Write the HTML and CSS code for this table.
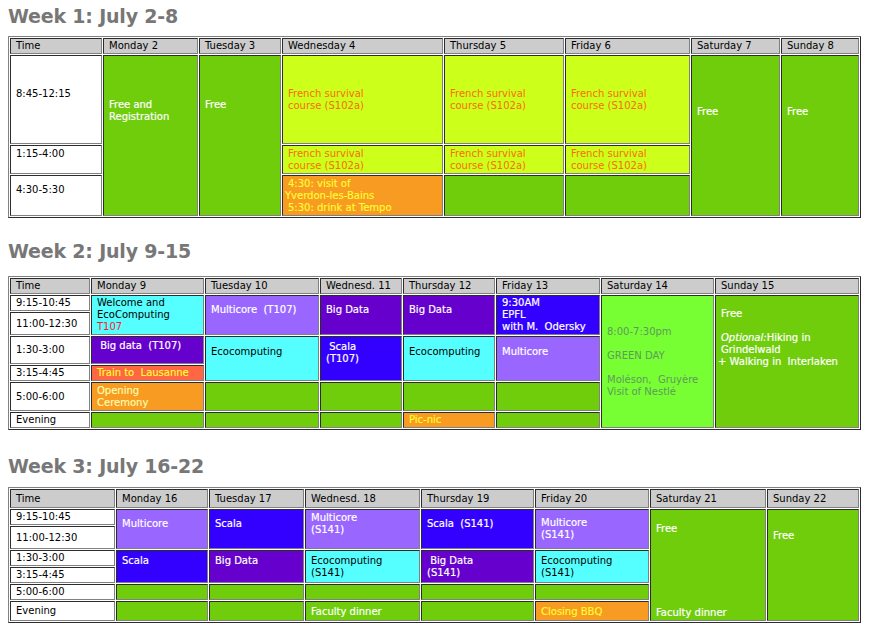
FILE: index.html
```html
<!DOCTYPE html>
<html>
<head>
<meta charset="utf-8">
<title>Summer school schedule</title>
<link rel="stylesheet" href="styles.css">
</head>
<body>
<div class="page">

<section class="week wk1">
<h2 class="wk-title">Week 1: July 2-8</h2>
<table class="sched">
<colgroup>
<col class="c92"><col class="c95"><col class="c82"><col class="c161"><col class="c120"><col class="c125"><col class="c89"><col class="c78">
</colgroup>
<tr class="h16"><th>Time</th><th>Monday 2</th><th>Tuesday 3</th><th>Wednesday 4</th><th>Thursday 5</th><th>Friday 6</th><th>Saturday 7</th><th>Sunday 8</th></tr>
<tr class="h89">
<td class="time">8:45-12:15<br>&nbsp;</td>
<td class="green wt top pt43" rowspan="3">Free and<br>Registration</td>
<td class="green wt top pt43" rowspan="3">Free</td>
<td class="lime fr">French survival<br>course (S102a)</td>
<td class="lime fr">French survival<br>course (S102a)</td>
<td class="lime fr">French survival<br>course (S102a)</td>
<td class="green wt top pt50" rowspan="3">Free</td>
<td class="green wt top pt50" rowspan="3">Free</td>
</tr>
<tr class="h29">
<td class="time">1:15-4:00<br>&nbsp;</td>
<td class="lime fr">French survival<br>course (S102a)</td>
<td class="lime fr">French survival<br>course (S102a)</td>
<td class="lime fr">French survival<br>course (S102a)</td>
</tr>
<tr class="h41">
<td class="time">4:30-5:30<br>&nbsp;</td>
<td class="orange yt">4:30: visit of<br><span class="out">Yverdon-les-Bains</span><br>5:30: drink at Tempo</td>
<td class="green"></td>
<td class="green"></td>
</tr>
</table>
</section>

<section class="week wk2">
<h2 class="wk-title">Week 2: July 9-15</h2>
<table class="sched">
<colgroup>
<col class="c80"><col class="c113"><col class="c114"><col class="c82"><col class="c92"><col class="c104"><col class="c113"><col class="c144">
</colgroup>
<tr class="h16"><th>Time</th><th>Monday 9</th><th>Tuesday 10</th><th>Wednesd. 11</th><th>Thursday 12</th><th>Friday 13</th><th>Saturday 14</th><th>Sunday 15</th></tr>
<tr class="h16">
<td class="time">9:15-10:45</td>
<td class="cyan" rowspan="2">Welcome and<br>EcoComputing<br><span class="red">T107</span></td>
<td class="lpurple wt top pt8" rowspan="2">Multicore&nbsp; (T107)</td>
<td class="dpurple wt top pt8" rowspan="2">Big Data</td>
<td class="dpurple wt top pt8" rowspan="2">Big Data</td>
<td class="blue wt top pt1" rowspan="2">9:30AM<br>EPFL<br>with M.&nbsp; Odersky</td>
<td class="bgreen gt" rowspan="6">8:00-7:30pm<br><br>GREEN DAY<br><br>Moléson,&nbsp; Gruyère<br>Visit of Nestlé</td>
<td class="green wt top pt12" rowspan="6">Free<br><br><i>Optional:</i>Hiking in<br>Grindelwald<br><span class="out">+ Walking in&nbsp; Interlaken</span></td>
</tr>
<tr class="h23">
<td class="time">11:00-12:30</td>
</tr>
<tr class="h28">
<td class="time">1:30-3:00</td>
<td class="dpurple wt top pt3">&nbsp;Big data&nbsp; (T107)</td>
<td class="cyan top pt9" rowspan="2">Ecocomputing</td>
<td class="blue wt top pt4" rowspan="2">&nbsp;Scala<br>(T107)</td>
<td class="cyan top pt9" rowspan="2">Ecocomputing</td>
<td class="lpurple wt top pt9" rowspan="2">Multicore</td>
</tr>
<tr class="h16">
<td class="time">3:15-4:45</td>
<td class="train yt">Train to&nbsp; Lausanne</td>
</tr>
<tr class="h28">
<td class="time">5:00-6:00</td>
<td class="orange ct top pt2">Opening<br>Ceremony</td>
<td class="green"></td>
<td class="green"></td>
<td class="green"></td>
<td class="green"></td>
</tr>
<tr class="h16">
<td class="time">Evening</td>
<td class="green"></td>
<td class="green"></td>
<td class="green"></td>
<td class="orange yt">Pic-nic</td>
<td class="green"></td>
</tr>
</table>
</section>

<section class="week wk3">
<h2 class="wk-title">Week 3: July 16-22</h2>
<table class="sched">
<colgroup>
<col class="c105"><col class="c92"><col class="c95"><col class="c115"><col class="c113"><col class="c114"><col class="c116"><col class="c92">
</colgroup>
<tr class="h19"><th>Time</th><th>Monday 16</th><th>Tuesday 17</th><th>Wednesd. 18</th><th>Thursday 19</th><th>Friday 20</th><th>Saturday 21</th><th>Sunday 22</th></tr>
<tr class="h16">
<td class="time">9:15-10:45</td>
<td class="lpurple wt top pt8" rowspan="2">Multicore</td>
<td class="blue wt top pt8" rowspan="2">Scala</td>
<td class="lpurple wt top pt2" rowspan="2">Multicore<br>(S141)</td>
<td class="blue wt top pt8" rowspan="2">Scala&nbsp; (S141)</td>
<td class="lpurple wt top pt7" rowspan="2">Multicore<br>(S141)</td>
<td class="green wt top pt13 pb0" rowspan="6">Free<div class="late">Faculty dinner</div></td>
<td class="green wt top pt20" rowspan="6">Free</td>
</tr>
<tr class="h23">
<td class="time">11:00-12:30</td>
</tr>
<tr class="h16">
<td class="time">1:30-3:00</td>
<td class="blue wt top pt4" rowspan="2">Scala</td>
<td class="dpurple wt top pt4" rowspan="2">Big Data</td>
<td class="cyan top pt4" rowspan="2">Ecocomputing<br>(S141)</td>
<td class="dpurple wt top pt4" rowspan="2">&nbsp;Big Data<br>(S141)</td>
<td class="cyan top pt4" rowspan="2">Ecocomputing<br>(S141)</td>
</tr>
<tr class="h16">
<td class="time">3:15-4:45</td>
</tr>
<tr class="h16">
<td class="time">5:00-6:00</td>
<td class="green"></td>
<td class="green"></td>
<td class="green"></td>
<td class="green"></td>
<td class="green"></td>
</tr>
<tr class="h20">
<td class="time">Evening</td>
<td class="green"></td>
<td class="green"></td>
<td class="green wt top pt4">Faculty dinner</td>
<td class="green"></td>
<td class="orange yt top pt4">Closing BBQ</td>
</tr>
</table>
</section>

</div>
</body>
</html>
```

FILE: styles.css
```css
html, body {
  margin: 0;
  background: #fff;
}

body {
  font-family: "DejaVu Sans", Verdana, sans-serif;
  font-size: 10px;
  line-height: 12px;
  color: #000;
}

.page {
  padding: 4px 8px 0;
}

.wk-title {
  margin: 0;
  font-size: 19px;
  line-height: 24px;
  letter-spacing: -0.2px;
  font-weight: bold;
  color: #777;
}

.wk1 .wk-title { margin-bottom: 8px; }
.wk2 { margin-top: 21px; }
.wk2 .wk-title { margin-bottom: 13px; }
.wk3 { margin-top: 24px; }
.wk3 .wk-title { margin-bottom: 9px; }

.sched {
  table-layout: fixed;
  width: 853px;
  border-collapse: separate;
  border-spacing: 1px;
  border: 1px outset gray;
}

.sched th,
.sched td {
  border: 1px inset gray;
  padding: 1px 2px 1px 5px;
  text-align: left;
  vertical-align: middle;
  font-weight: normal;
  white-space: nowrap;
  overflow: hidden;
}

.sched th {
  background: #ccc;
}

/* column widths */
.c78 { width: 78px; }
.c80 { width: 80px; }
.c82 { width: 82px; }
.c89 { width: 89px; }
.c92 { width: 92px; }
.c95 { width: 95px; }
.c104 { width: 104px; }
.c105 { width: 105px; }
.c113 { width: 113px; }
.c114 { width: 114px; }
.c115 { width: 115px; }
.c116 { width: 116px; }
.c120 { width: 120px; }
.c125 { width: 125px; }
.c144 { width: 144px; }
.c161 { width: 161px; }

/* row heights */
.h16 { height: 16px; }
.h19 { height: 19px; }
.h20 { height: 20px; }
.h23 { height: 23px; }
.h28 { height: 28px; }
.h29 { height: 29px; }
.h41 { height: 41px; }
.h89 { height: 89px; }

/* vertical placement */
.sched .top { vertical-align: top; }
.pt1 { padding-top: 1px !important; }
.pt2 { padding-top: 2px !important; }
.pt3 { padding-top: 3px !important; }
.pt4 { padding-top: 4px !important; }
.pt7 { padding-top: 7px !important; }
.pt8 { padding-top: 8px !important; }
.pt9 { padding-top: 9px !important; }
.pt12 { padding-top: 12px !important; }
.pt13 { padding-top: 13px !important; }
.pt20 { padding-top: 20px !important; }
.pt43 { padding-top: 43px !important; }
.pt50 { padding-top: 50px !important; }
.pb0 { padding-bottom: 0 !important; }

.late { margin-top: 72px; }
.out { margin-left: -3px; }

/* cell colours */
.time { background: #fff; }
.green { background: #6fcd0b; }
.lime { background: #ccff1a; }
.orange { background: #f79b23; }
.cyan { background: #55ffff; }
.lpurple { background: #9966ff; }
.dpurple { background: #6600cc; }
.blue { background: #3300ff; }
.train { background: #ff6644; }
.bgreen { background: #77ff33; }

/* text colours */
.wt {
  color: #fff;
  -webkit-text-stroke: 0.2px #fff;
}
.fr { color: #ff6a10; }
.yt {
  color: #ffff33;
  -webkit-text-stroke: 0.15px #ffff33;
}
.ct {
  color: #ffffb0;
  -webkit-text-stroke: 0.15px #ffffb0;
}
.gt { color: #5e9a5e; }
.red { color: #ff1a2a; }
```
